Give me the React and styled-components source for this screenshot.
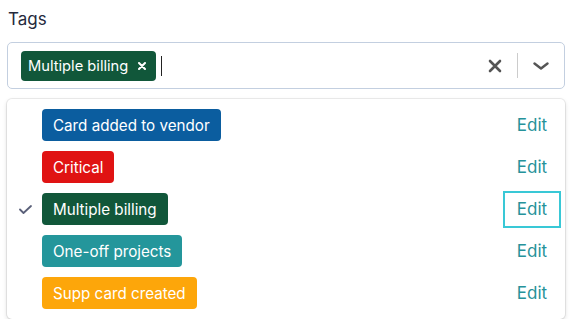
import React from "react";
import styled, { createGlobalStyle } from "styled-components";

const Global = createGlobalStyle`
  html, body { margin: 0; padding: 0; background: #fff; }
  body { font-family: Inter, "Noto Sans", sans-serif; -webkit-font-smoothing: antialiased; }
`;

const Page = styled.div`
  width: 583px;
  padding: 7px 18px 0 7px;
  box-sizing: border-box;
`;

const Label = styled.div`
  font-size: 17px;
  line-height: 24px;
  color: #252a3c;
  padding-left: 1px;
  margin-bottom: 11px;
`;

const Control = styled.div`
  display: flex;
  align-items: center;
  height: 47px;
  box-sizing: border-box;
  border: 1px solid #c3cfe0;
  border-radius: 5px;
  padding: 0 0 0 13px;
  background: #fff;
`;

const ValueArea = styled.div`
  flex: 1;
  display: flex;
  align-items: center;
  gap: 5px;
`;

const SelectedChip = styled.div`
  display: inline-flex;
  align-items: center;
  height: 30px;
  padding: 0 10px 0 7px;
  border-radius: 4px;
  background: #11573a;
  color: #fff;
  font-size: 14.7px;
  gap: 10px;
`;

const ChipX = styled.svg`
  width: 8px;
  height: 8px;
  display: block;
`;

const Caret = styled.span`
  display: block;
  width: 1px;
  height: 20px;
  background: #222;
`;

const Indicators = styled.div`
  display: flex;
  align-items: center;
  height: 100%;
`;

const IconBtn = styled.div`
  display: flex;
  align-items: center;
  justify-content: center;
  width: ${(p) => p.$w}px;
  height: 100%;
  color: #555;
`;

const Sep = styled.span`
  display: block;
  width: 1px;
  height: 25px;
  background: #cccccc;
`;

const Menu = styled.div`
  margin-top: 10px;
  border-radius: 5px;
  background: #fff;
  box-shadow: 0 0 0 1px rgba(0, 0, 0, 0.07), 0 2px 5px rgba(0, 0, 0, 0.14);
  padding: 5px 4px 5px 0;
`;

const Row = styled.div`
  display: grid;
  grid-template-columns: 35px 1fr auto;
  align-items: center;
  height: 42px;
`;

const CheckCell = styled.div`
  display: flex;
  justify-content: center;
  padding-left: 1px;
  color: #5a6079;
`;

const Tag = styled.div`
  justify-self: start;
  display: inline-flex;
  align-items: center;
  height: 32px;
  padding: 0 11px;
  border-radius: 4px;
  background: ${(p) => p.$bg};
  color: #fff;
  font-size: 15.2px;
`;

const EditBtn = styled.div`
  box-sizing: border-box;
  height: 37px;
  width: 58px;
  display: flex;
  align-items: center;
  justify-content: center;
  font-size: 17px;
  color: #26929a;
  border: 2px solid ${(p) => (p.$focus ? "#39c8d6" : "transparent")};
`;

const tags = [
  { name: "Card added to vendor", bg: "#0b5d9f" },
  { name: "Critical", bg: "#e01313" },
  { name: "Multiple billing", bg: "#11573a", selected: true },
  { name: "One-off projects", bg: "#24969b" },
  { name: "Supp card created", bg: "#fda60a" },
];

export default function App() {
  return (
    <Page>
      <Global />
      <Label>Tags</Label>
      <Control>
        <ValueArea>
          <SelectedChip>
            Multiple billing
            <ChipX viewBox="0 0 8 8">
              <path d="M1 1L7 7M7 1L1 7" stroke="#fff" strokeWidth="2" strokeLinecap="round" />
            </ChipX>
          </SelectedChip>
          <Caret />
        </ValueArea>
        <Indicators>
          <IconBtn $w={44}>
            <svg width="14" height="14" viewBox="0 0 14 14">
              <path d="M2 2L12 12M12 2L2 12" stroke="#555" strokeWidth="2.6" strokeLinecap="round" />
            </svg>
          </IconBtn>
          <Sep />
          <IconBtn $w={46}>
            <svg width="16" height="8" viewBox="0 0 16 8">
              <path d="M1.5 1.5L8 6.5L14.5 1.5" fill="none" stroke="#555" strokeWidth="2.4" strokeLinecap="round" strokeLinejoin="round" />
            </svg>
          </IconBtn>
        </Indicators>
      </Control>
      <Menu>
        {tags.map((t) => (
          <Row key={t.name}>
            <CheckCell>
              {t.selected && (
                <svg width="13" height="9" viewBox="0 0 13 9">
                  <path d="M1 4.5L4.5 8L12 1" fill="none" stroke="#5a6079" strokeWidth="1.8" strokeLinecap="round" strokeLinejoin="round" />
                </svg>
              )}
            </CheckCell>
            <Tag $bg={t.bg}>{t.name}</Tag>
            <EditBtn $focus={t.selected}>Edit</EditBtn>
          </Row>
        ))}
      </Menu>
    </Page>
  );
}
